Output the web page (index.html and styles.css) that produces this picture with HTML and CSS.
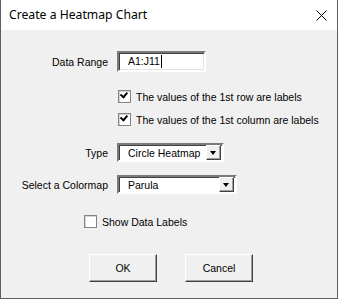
FILE: index.html
```html
<!DOCTYPE html>
<html lang="en">
<head>
    <meta charset="UTF-8">
    <title>Create a Heatmap Chart</title>
    <link rel="stylesheet" href="styles.css">
</head>

<body>
    <div class="window">
        <div class="titlebar">
            <span class="title">Create a Heatmap Chart</span>
            <svg class="close" width="11" height="11" viewBox="0 0 11 11">
                <path d="M0.5 0.5 L10.5 10.5 M10.5 0.5 L0.5 10.5" stroke="#000" stroke-width="1" fill="none"/>
            </svg>
        </div>

        <div class="content">
            <div class="row range-row">
                <label class="field-label">Data Range</label>
                <div class="textbox">A1:J11<span class="caret"></span></div>
            </div>

            <div class="row check-row first-check">
                <span class="field-label"></span>
                <label class="check">
                    <span class="box checked"></span>
                    The values of the 1st row are labels
                </label>
            </div>

            <div class="row check-row second-check">
                <span class="field-label"></span>
                <label class="check">
                    <span class="box checked"></span>
                    The values of the 1st column are labels
                </label>
            </div>

            <div class="row type-row">
                <label class="field-label">Type</label>
                <div class="combo type-combo">
                    <span class="combo-text">Circle Heatmap</span>
                    <span class="combo-btn"></span>
                </div>
            </div>

            <div class="row map-row">
                <label class="field-label">Select a Colormap</label>
                <div class="combo map-combo">
                    <span class="combo-text">Parula</span>
                    <span class="combo-btn"></span>
                </div>
            </div>

            <div class="labels-row">
                <label class="check">
                    <span class="box"></span>
                    Show Data Labels
                </label>
            </div>

            <div class="buttons">
                <button class="btn">OK</button>
                <button class="btn">Cancel</button>
            </div>
        </div>
    </div>
</body>
</html>
```

FILE: styles.css
```css
body {
    margin: 0;
    font-family: 'Liberation Sans', Arial, sans-serif;
    font-size: 10.5px;
    color: #000;
}

.window {
    width: 336px;
    height: 298px;
    border: 1px solid #5f5f5f;
    border-top: none;
    background: #f0f0f0;
}

.titlebar {
    height: 30px;
    background: #fff;
    display: flex;
    align-items: center;
    justify-content: space-between;
    padding: 0 10px 0 8px;
}

.title {
    font-family: 'Noto Sans', sans-serif;
    font-size: 12.2px;
    margin-top: -1px;
}

.close {
    margin-top: 1px;
}

.content {
    padding-top: 21px;
}

.row {
    display: flex;
    align-items: center;
}

.field-label {
    width: 107px;
    text-align: right;
    margin-right: 9px;
}

.textbox {
    width: 76px;
    height: 17px;
    background: #fff;
    border: 2px solid;
    border-color: #7a7a7a #ffffff #ffffff #7a7a7a;
    box-shadow: inset 1px 1px 0 #404040, inset -1px -1px 0 #e3e3e3;
    padding-left: 9px;
    line-height: 17px;
    display: flex;
    align-items: center;
}

.caret {
    display: inline-block;
    width: 1px;
    height: 13px;
    background: #000;
    margin-left: 1px;
}

.first-check {
    margin-top: 18px;
}

.second-check {
    margin-top: 10px;
}

.check {
    display: flex;
    align-items: center;
    gap: 5px;
}

.box {
    width: 11px;
    height: 11px;
    border: 1px solid #848484;
    box-shadow: inset 1px 1px 0 #d5d5d5;
    background: #fff;
    margin-left: 1px;
    position: relative;
}

.box.checked::after {
    content: "";
    position: absolute;
    left: 2px;
    top: 1px;
    width: 5px;
    height: 3px;
    border-left: 2px solid #000;
    border-bottom: 2px solid #000;
    transform: rotate(-50deg);
    transform-origin: 3px 3px;
}

.type-row {
    margin-top: 17px;
}

.map-row {
    margin-top: 13px;
}

.combo {
    height: 15px;
    background: #fff;
    border: 2px solid;
    border-color: #7a7a7a #ffffff #ffffff #7a7a7a;
    box-shadow: inset 1px 1px 0 #404040;
    display: flex;
    align-items: center;
    justify-content: space-between;
    padding: 0 1px 0 9px;
}

.type-combo {
    width: 93px;
}

.map-combo {
    width: 106px;
}

.combo-btn {
    width: 13px;
    height: 13px;
    background: #f0f0f0;
    border: 1px solid;
    border-color: #ffffff #404040 #404040 #ffffff;
    box-shadow: inset -1px -1px 0 #a0a0a0;
    position: relative;
}

.combo-btn::after {
    content: "";
    position: absolute;
    left: 3px;
    top: 5px;
    border-left: 3px solid transparent;
    border-right: 3px solid transparent;
    border-top: 4px solid #000;
}

.labels-row {
    margin-top: 21px;
    padding-left: 82px;
}

.buttons {
    margin-top: 26px;
    display: flex;
    gap: 28px;
    padding-left: 88px;
}

.btn {
    width: 68px;
    height: 28px;
    font-family: 'Liberation Sans', Arial, sans-serif;
    font-size: 10.5px;
    background: #f0f0f0;
    border: 1px solid;
    border-color: #ffffff #404040 #404040 #ffffff;
    box-shadow: inset -1px -1px 0 #a0a0a0;
    padding: 0;
}
```
